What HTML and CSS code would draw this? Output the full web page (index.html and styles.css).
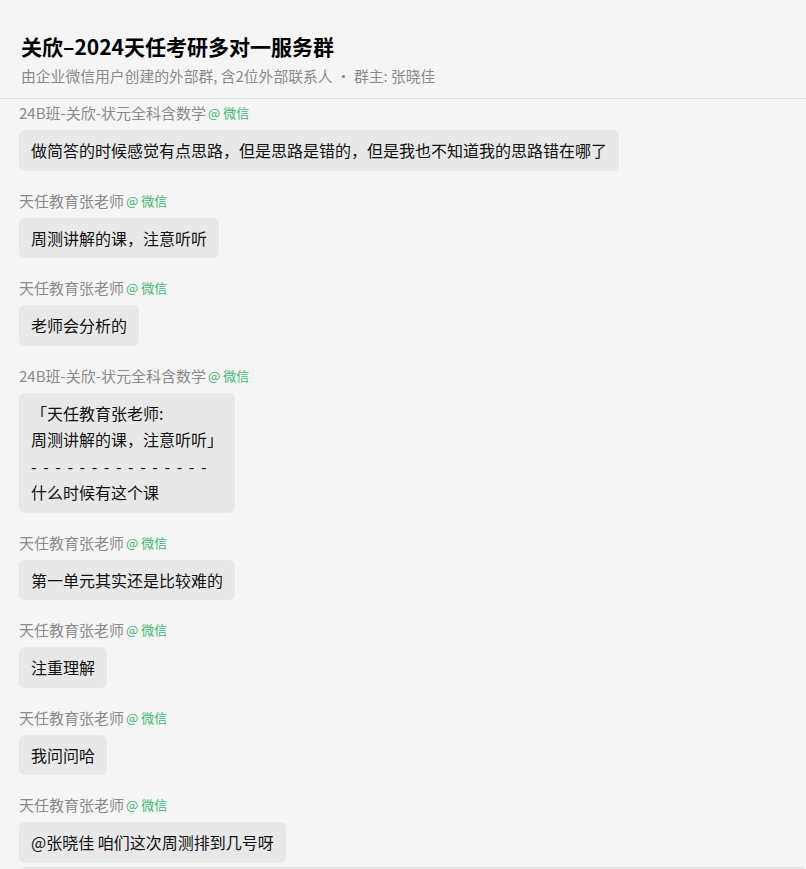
FILE: index.html
```html
<!DOCTYPE html>
<html lang="zh-CN">

<head>
  <meta charset="UTF-8">
  <meta name="viewport" content="width=device-width, initial-scale=1.0">
  <title>关欣–2024天任考研多对一服务群</title>
  <link rel="stylesheet" href="styles.css">
</head>

<body>
  <div class="chat">
    <div class="header">
      <h1>关欣–2024天任考研多对一服务群</h1>
      <p>由企业微信用户创建的外部群, 含2位外部联系人 · 群主: 张晓佳</p>
    </div>

    <div class="messages">
      <div class="message">
        <div class="sender">24B班-关欣-状元全科含数学<span class="source">@ 微信</span></div>
        <div class="bubble">做简答的时候感觉有点思路，但是思路是错的，但是我也不知道我的思路错在哪了</div>
      </div>

      <div class="message">
        <div class="sender">天任教育张老师<span class="source">@ 微信</span></div>
        <div class="bubble">周测讲解的课，注意听听</div>
      </div>

      <div class="message">
        <div class="sender">天任教育张老师<span class="source">@ 微信</span></div>
        <div class="bubble">老师会分析的</div>
      </div>

      <div class="message">
        <div class="sender">24B班-关欣-状元全科含数学<span class="source">@ 微信</span></div>
        <div class="bubble">「天任教育张老师:<br>周测讲解的课，注意听听」<br><span class="divider">- - - - - - - - - - - - - - -</span><br>什么时候有这个课</div>
      </div>

      <div class="message">
        <div class="sender">天任教育张老师<span class="source">@ 微信</span></div>
        <div class="bubble">第一单元其实还是比较难的</div>
      </div>

      <div class="message">
        <div class="sender">天任教育张老师<span class="source">@ 微信</span></div>
        <div class="bubble">注重理解</div>
      </div>

      <div class="message">
        <div class="sender">天任教育张老师<span class="source">@ 微信</span></div>
        <div class="bubble">我问问哈</div>
      </div>

      <div class="message">
        <div class="sender">天任教育张老师<span class="source">@ 微信</span></div>
        <div class="bubble">@张晓佳 咱们这次周测排到几号呀</div>
      </div>

      <div class="message-more"></div>
    </div>
  </div>
</body>

</html>
```

FILE: styles.css
```css
* {
  margin: 0;
  padding: 0;
  box-sizing: border-box;
}

body {
  font-family: "Noto Sans CJK SC", "Noto Sans", sans-serif;
  background: #f5f5f5;
  color: #111;
  overflow: hidden;
}

.header {
  padding: 32px 21px 11px;
  border-bottom: 1px solid #e2e2e2;
}

.header h1 {
  font-size: 21px;
  font-weight: 700;
  line-height: 28px;
  color: #000;
}

.header p {
  margin-top: 5px;
  font-size: 14.8px;
  line-height: 22px;
  color: #8a8a8a;
}

.messages {
  padding: 4px 0 0 19px;
}

.message {
  margin-bottom: 20px;
}

.sender {
  display: flex;
  align-items: center;
  font-size: 15px;
  line-height: 20px;
  color: #8a8a8a;
  margin-bottom: 7px;
}

.source {
  margin-left: 2px;
  font-size: 13px;
  font-weight: 400;
  color: #3db56f;
}

.bubble {
  display: inline-block;
  background: #e8e8e8;
  border-radius: 6px;
  padding: 7px 12px;
  font-size: 16px;
  line-height: 26.5px;
  color: #111;
}

.divider {
  letter-spacing: 1.5px;
}

.message-more {
  height: 40px;
  margin-left: 1px;
  background: #e8e8e8;
  border-radius: 6px;
  margin-top: -16px;
  border-top: 1px solid #e0e0e0;
}
```
